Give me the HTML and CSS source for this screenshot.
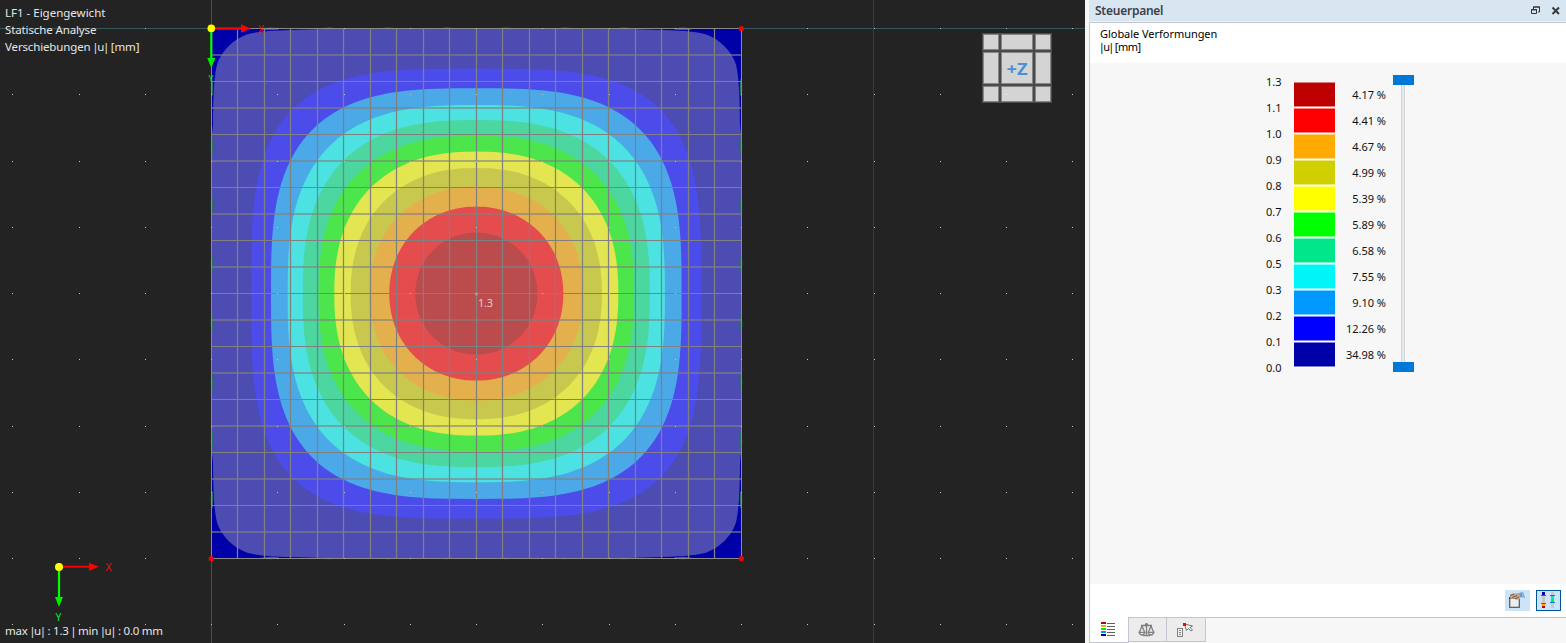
FILE: index.html
```html
<!DOCTYPE html>
<html lang="de">
<head>
<meta charset="utf-8">
<title>LF1 - Eigengewicht</title>
<link rel="stylesheet" href="styles.css">
</head>
<body>
<main class="app">
  <section class="viewport">
    <svg class="scene" width="1085" height="643" viewBox="0 0 1085 643">
      <g class="axis-lines">
        <path d="M0 28.5H1085"/>
        <path d="M211.5 0V643"/>
        <path class="faint" d="M873.5 0V643"/>
      </g>
      <rect class="plate" x="211" y="28" width="531" height="531"/>
      <g id="bands"></g>
      <g id="corners"></g>
      <g id="supports"></g>
      <g id="mesh"></g>
      <rect class="outline" x="211.5" y="28.5" width="530" height="530"/>
      <g id="dots"></g>
      <g class="nodes">
        <circle cx="741.3" cy="28.5" r="2.6"/>
        <circle cx="211.3" cy="558.5" r="2.6"/>
        <circle cx="741.3" cy="558.5" r="2.6"/>
        <path d="M740.5 28.5h2M210.5 558.5h2M740.5 558.5h2"/>
      </g>
      <circle cx="476.3" cy="294" r="1.5" fill="#a99"/>
      <text class="peak" x="478" y="307" textLength="15">1.3</text>
      <g class="triad">
        <path class="x-shaft" d="M211 28.5H243"/>
        <path class="x-head" d="M241 24.3L250.5 28.5L241 32.7Z"/>
        <path class="y-shaft" d="M211.3 28V60"/>
        <path class="y-head" d="M207.2 58L211.3 68L215.4 58Z"/>
        <circle cx="211.3" cy="28.4" r="3.8"/>
        <text class="x-name" x="258" y="32.500">X</text>
        <text class="y-name small" x="208.5" y="82">Y</text>
      </g>
      <g class="triad">
        <path class="x-shaft thin" d="M59 566.7H90"/>
        <path class="x-head" d="M89 562.7L99 566.7L89 570.7Z"/>
        <path class="y-shaft" d="M59 567V599"/>
        <path class="y-head" d="M55 597L59 607L63 597Z"/>
        <circle cx="59" cy="567" r="4"/>
        <text class="x-name" x="105.5" y="571">X</text>
        <text class="y-name" x="55.5" y="621">Y</text>
      </g>
      <g class="view-cube">
        <rect class="cube-frame" x="982" y="33" width="70" height="70"/>
        <g class="cube-faces">
          <path d="M983.5 34.5h15v15h-15zM1001.500 34.5h31v15h-31zM1035.500 34.5h15v15h-15z"/>
          <path d="M983.5 52.5h15v31h-15zM1001.500 52.5h31v31h-31zM1035.500 52.5h15v31h-15z"/>
          <path d="M983.5 86.500h15v15h-15zM1001.500 86.500h31v15h-31zM1035.500 86.500h15v15h-15z"/>
        </g>
        <rect x="1006" y="94" width="1" height="1" fill="#fff"/>
        <text class="cube-name" x="1006.5" y="75.300" textLength="21" lengthAdjust="spacingAndGlyphs">+Z</text>
      </g>
    </svg>
    <div class="captions">
      <p>LF1 - Eigengewicht</p>
      <p class="caption-analysis">Statische Analyse</p>
      <p class="caption-result">Verschiebungen <span class="bar">|</span>u<span class="bar">|</span> [mm]</p>
    </div>
    <p class="extremes">max <span class="bar">|</span>u<span class="bar">|</span> : 1.3 <span class="bar">|</span> min <span class="bar">|</span>u<span class="bar">|</span> : 0.0 mm</p>
  </section>

  <aside class="panel">
    <header class="title-bar">
      <h1>Steuerpanel</h1>
      <svg width="32" height="20" viewBox="0 0 32 20">
        <path d="M3.5 9V7H9.5V12H8M3 7h7" fill="none" stroke="#333"/>
        <path d="M1.5 9.5h5v4h-5zM1 9.9h6" fill="#d8e6f2" stroke="#333"/>
        <path d="M22.500 7.500L29 14M29 7.500L22.500 14" stroke="#3a3a3a" stroke-width="2"/>
      </svg>
    </header>
    <div class="subject">
      <p class="subject-name">Globale Verformungen</p>
      <p class="subject-unit"><span class="bar">|</span>u<span class="bar">|</span> [mm]</p>
    </div>
    <div class="legend">
      <div class="values">
        <span>1.3</span><span>1.1</span><span>1.0</span><span>0.9</span><span>0.8</span><span>0.7</span><span>0.6</span><span>0.5</span><span>0.3</span><span>0.2</span><span>0.1</span><span>0.0</span>
      </div>
      <div class="swatches">
        <i class="c1"></i><i class="c2"></i><i class="c3"></i><i class="c4"></i><i class="c5"></i><i class="c6"></i><i class="c7"></i><i class="c8"></i><i class="c9"></i><i class="c10"></i><i class="c11"></i>
      </div>
      <div class="shares">
        <span>4.17 %</span><span>4.41 %</span><span>4.67 %</span><span>4.99 %</span><span>5.39 %</span><span>5.89 %</span><span>6.58 %</span><span>7.55 %</span><span>9.10 %</span><span>12.26 %</span><span>34.98 %</span>
      </div>
      <div class="slider"><b></b><i></i><b></b></div>
    </div>
    <div class="tools">
      <span class="tool">
        <svg width="25" height="21" viewBox="0 0 25 21">
          <rect x="4.7" y="7.7" width="9.6" height="9.6" fill="#eee" stroke="#555" stroke-width="1.2"/>
          <path d="M4 8h10.500" stroke="#333" stroke-width="1.500"/>
          <path d="M5 5L8 3.500L14 3L16 6L15 9L12 10L10 8.500L7 9L5 8Z" fill="#c2a58d"/>
          <path d="M5 5.500L9 4M7 7.500L12 5.500M10 9L14 7" stroke="#725b4f"/>
          <path d="M14 3L18 2L20 8L15.500 7Z" fill="#6c99cd"/>
          <path d="M17 2.500L18.500 8" stroke="#a9c5e3"/>
        </svg>
      </span>
      <span class="tool selected">
        <svg width="23" height="19" viewBox="0 0 23 19">
          <path d="M5 1h3v16H5zM14 1h3v16h-3z" fill="#c8c8c8"/>
          <path d="M5 1h3v3H5z" fill="#0000a0"/>
          <path d="M5 13h3v2H5z" fill="#ffa500"/>
          <path d="M5 15h3v2H5z" fill="#bd0000"/>
          <path d="M14 5h3v3h-3z" fill="#00e8cc"/>
          <path d="M14 8h3v3h-3z" fill="#12ec20"/>
          <path d="M4 4.500h5M4 12.500h5M13 4.500h5M13 11.500h5" stroke="#0078d7"/>
        </svg>
      </span>
    </div>
    <nav class="tabs">
      <span class="tab active">
        <svg width="15" height="15" viewBox="0 0 15 15">
          <path d="M0 0h5v2H0z" fill="#bd0000"/>
          <path d="M0 3h5v2H0z" fill="#ffa500"/>
          <path d="M0 6h5v2H0z" fill="#00f000"/>
          <path d="M0 9h5v2H0z" fill="#0094f4"/>
          <path d="M0 12h5v2H0z" fill="#0000a5"/>
          <path d="M6 1.500h8M6 4.500h8M6 7.500h8M6 10.500h8M6 13.500h8" stroke="#606060"/>
        </svg>
      </span>
      <span class="tab">
        <svg width="17" height="16" viewBox="0 0 17 16">
          <g fill="none" stroke="#808080" stroke-width="1.300">
            <path d="M8.500 1v12M5 13.500h7M3 3.500h11"/>
            <path d="M4 4L1.500 10M4 4L6.500 10M13 4L10.500 10M13 4L15.500 10"/>
            <path d="M1 10.300h6Q6 13 4 13T1 10.300ZM10 10.300h6Q15 13 13 13T10 10.300Z"/>
          </g>
          <circle cx="8.500" cy="2.800" r="1.700" fill="#808080"/>
        </svg>
      </span>
      <span class="tab">
        <svg width="18" height="17" viewBox="0 0 18 17">
          <rect x="1.500" y="7.500" width="5" height="8" fill="#f4f4f4" stroke="#808080"/>
          <path d="M3 9.500h2M3 11.500h2M3 13.500h2" stroke="#808080"/>
          <path d="M8.500 3L16.500 5L14 6.500L16.500 9L15 10L12.500 7.500L10.500 9.500Z" fill="#f4f4f4" stroke="#777"/>
          <path d="M7 2h3v3H7z" fill="#f00"/>
        </svg>
      </span>
    </nav>
  </aside>
</main>
<script src="scene.js"></script>
</body>
</html>
```
FILE: styles.css
```css
* { box-sizing: border-box; }
body { margin: 0; background: #f7f7f7; font-family: "Noto Sans", "Open Sans", sans-serif; font-size: 11px; }
p, h1 { margin: 0; white-space: nowrap; }
svg { display: block; }
.app { display: flex; width: 1566px; height: 643px; overflow: hidden; }
.bar { margin: 0 -1.2px; }

.viewport { position: relative; flex: 0 0 1085px; background: #232323; color: #e6e6e6; font-size: 11.5px; }
.captions { position: absolute; left: 5px; top: 4px; line-height: 17px; }
.caption-analysis { letter-spacing: -0.12px; }
.caption-result { letter-spacing: -0.14px; }
.extremes { position: absolute; left: 5px; top: 622px; line-height: 17px; letter-spacing: -0.23px; }
.axis-lines path { stroke: #345757; }
.axis-lines .faint { stroke: #333d3d; }
.plate { fill: #4c4cb2; }
.outline { fill: none; stroke: #8a8a8a; }
.corner { fill: #0000a8; }
.support { fill: #2c7068; }
.mesh-line { stroke: #808080; }
.mesh-line.thick { stroke: #80808099; stroke-width: 2; }
.mesh-line.vertical { stroke-width: 1.25; }
.dot { fill: #c4c4c4; }
.nodes circle { fill: #f00; }
.nodes path { stroke: #a02020; }
.peak { fill: #e8c8c8; font-size: 11px; }
.x-shaft { stroke: #f00; stroke-width: 2.4; }
.x-shaft.thin { stroke-width: 1.8; }
.y-shaft { stroke: #0f0; stroke-width: 2.2; }
.x-head { fill: #f00; }
.y-head { fill: #0e0; }
.triad circle { fill: #ff0; }
.triad text { font-size: 10.5px; }
.triad .small { font-size: 9px; }
.triad .x-name { fill: #e81010; }
.triad .y-name { fill: #00e820; }
.cube-frame { fill: #4a4a4a; }
.cube-faces { fill: #d4d4d4; stroke: #858585; stroke-width: 1; }
.cube-name { fill: #4b90d2; font-size: 15.5px; font-weight: 700; }

.panel { flex: 1; display: flex; flex-direction: column; padding-left: 4px; background: #f7f7f7; }
.title-bar { display: flex; justify-content: space-between; height: 23px; padding: 0 4px 0 5px; border-bottom: 1px solid #c5c5d2; background: #d8e6f2; border-left: 1px solid #d8e6f2; box-shadow: inset 0 -1px #eef2f8; }
.title-bar h1 { font-size: 12px; line-height: 21px; font-weight: 600; color: #404048; letter-spacing: -0.25px; }
.subject { height: 40px; padding: 4px 0 0 10px; border-left: 1px solid #c5c5d2; background: #fff; line-height: 13px; color: #000; }
.subject-name { letter-spacing: -0.04px; }
.subject-unit { letter-spacing: -0.55px; }
.legend { display: flex; height: 521px; padding: 13px 0 0 176px; border-left: 1px solid #c5c5d2; color: #111; }
.values { display: flex; flex-direction: column; width: 28px; margin-top: -7px; }
.values span, .shares span { display: block; height: 26px; line-height: 26px; white-space: nowrap; }
.swatches { width: 41px; padding-top: 6px; }
.swatches i { display: block; height: 25px; margin-bottom: 1px; border-top: 1px solid #ffffff80; border-bottom: 1px solid #ffffff80; box-shadow: 0 1px #fff; }
.c1 { background: #bd0000; }
.c2 { background: #f00; }
.c3 { background: #ffaa00; }
.c4 { background: #d0d000; }
.c5 { background: #ff0; }
.c6 { background: #0f0; }
.c7 { background: #00e68a; }
.c8 { background: #00f6f6; }
.c9 { background: #0099ff; }
.c10 { background: #00f; }
.c11 { background: #0000a8; }
.shares { width: 51px; padding-top: 6px; text-align: right; }
.slider { display: flex; flex-direction: column; align-items: center; width: 21px; height: 297px; margin: -1px 0 0 7px; }
.slider b { flex: 0 0 10px; width: 21px; background: #0078d7; }
.slider i { flex: 1; width: 4px; margin-right: 1px; background: #e6e9e9; border: solid #d2d5d5; border-width: 0 1px; }
.tools { display: flex; justify-content: flex-end; gap: 6px; height: 33px; padding: 6px 5px 6px 0; background: #fff; border-left: 1px solid #c5c5d2; }
.tool { width: 25px; height: 21px; background: #cce4f7; }
.tool.selected { border: 1px solid #005499; }
.tabs { display: flex; align-items: flex-start; height: 26px; }
.tabs::after { content: ""; flex: 1; border-top: 1px solid #c5c5d2; }
.tab { display: flex; justify-content: center; align-items: center; width: 38px; height: 25px; padding-right: 2px; border: 1px solid #c5c5d2; border-left: 0; background: #ececec; }
.tab.active { width: 40px; height: 26px; border-left: 1px solid #c5c5d2; border-top: 0; background: #fff; }
.tab:last-child { width: 39px; }
```
FILE: scene.js
```js
const NS = 'http://www.w3.org/2000/svg';
const add = (id, tag, attrs) => {
  const el = document.createElementNS(NS, tag);
  for (const key in attrs) el.setAttribute(key, attrs[key]);
  document.getElementById(id).appendChild(el);
};

// Isobands as superellipses: [half width, exponent, colour]
const centre = [476.3, 293.6];
const bands = [
  [225, 3.45, '#4c4cea'],
  [205.3, 3.08, '#4ca9e8'],
  [188.6, 2.79, '#4ce2e2'],
  [173.5, 2.6, '#4cd6a0'],
  [157.8, 2.47, '#4ce64c'],
  [142, 2.35, '#e3e650'],
  [125.6, 2.25, '#c8c84e'],
  [107, 2.16, '#e4b04e'],
  [87, 2.07, '#e44c4e'],
  [61, 2.02, '#ba4c4e']
];
for (const [r, n, fill] of bands) {
  const pts = [];
  for (let i = 0; i < 240; i++) {
    const t = i * Math.PI / 120, c = Math.cos(t), s = Math.sin(t);
    const x = centre[0] + r * Math.sign(c) * Math.abs(c) ** (2 / n);
    const y = centre[1] + r * Math.sign(s) * Math.abs(s) ** (2 / n);
    pts.push(x.toFixed(2) + ',' + y.toFixed(2));
  }
  add('bands', 'polygon', { points: pts.join(' '), fill });
}

const corner = 'M0 0H128L79 1.500C55 2 42 4 35 6C22 11 10 22 5.500 36C2.500 50 1.800 65 1.500 96L0 110Z';
for (const [x, y, sx, sy] of [[211.5, 28.5, 1, 1], [741.5, 28.5, -1, 1], [211.5, 558.5, 1, -1], [741.5, 558.5, -1, -1]]) {
  add('corners', 'path', { d: corner, class: 'corner', transform: `translate(${x} ${y}) scale(${sx} ${sy})` });
}

for (let i = 1; i < 9; i++) {
  const p = i * 58.9;
  add('supports', 'ellipse', { cx: 211.5 + p, cy: 28.8, rx: 9, ry: 1.2, class: 'support' });
  add('supports', 'ellipse', { cx: 211.5 + p, cy: 558, rx: 9, ry: 1.2, class: 'support' });
  add('supports', 'ellipse', { cx: 212, cy: 28.5 + p, rx: 1.2, ry: 9, class: 'support' });
  add('supports', 'ellipse', { cx: 741, cy: 28.5 + p, rx: 1.2, ry: 9, class: 'support' });
}

for (let i = 1; i < 20; i++) {
  const p = i * 26.5;
  add('mesh', 'path', { d: `M212 ${28.5 + p}H741`, class: i % 2 ? 'mesh-line thick' : 'mesh-line' });
  add('mesh', 'path', { d: `M${Math.floor(211.2 + p) + 0.5} 29V558`, class: 'mesh-line vertical' });
}

for (let i = -3; i < 14; i++) {
  for (let j = 0; j < 10; j++) {
    add('dots', 'rect', { x: Math.floor(211.5 + i * 66.25), y: Math.floor(28.5 + j * 66.25), width: 1, height: 1, class: 'dot' });
  }
}
```
